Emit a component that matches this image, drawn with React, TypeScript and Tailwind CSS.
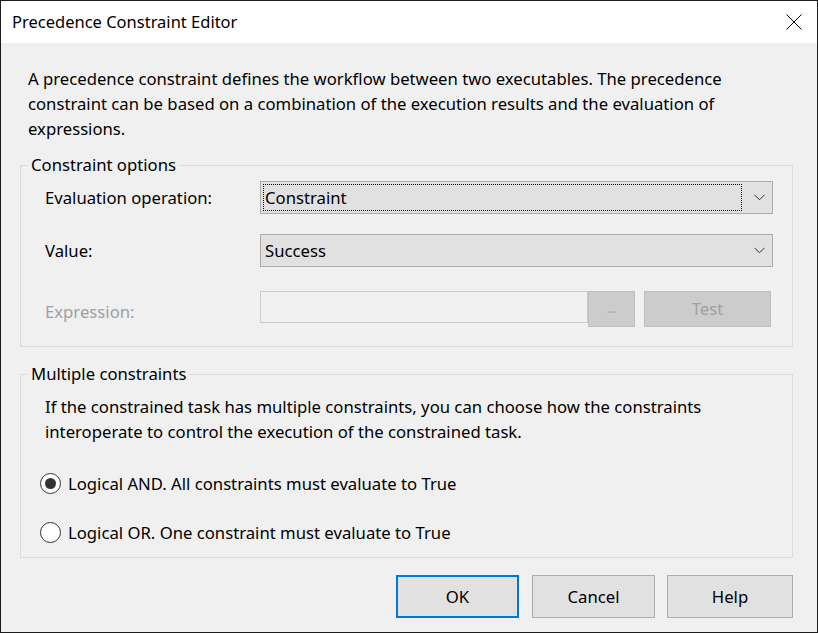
import React from 'react';

const font = "font-['Noto_Sans','Open_Sans',sans-serif]";

const Chevron = () => (
  <svg width="11" height="7" viewBox="0 0 11 7" className="shrink-0">
    <path d="M0.5 0.8 L5.5 5.8 L10.5 0.8" fill="none" stroke="#333333" strokeWidth="1" />
  </svg>
);

interface ComboProps {
  value: string;
  focused?: boolean;
}

const Combo = ({ value, focused }: ComboProps) => (
  <div className="flex h-[33px] w-[513px] items-center border border-[#adadad] bg-[#e1e1e1] pr-[6px]">
    <div
      className={
        focused
          ? 'ml-[2px] flex h-[27px] flex-1 items-center border border-dotted border-black pl-[1px]'
          : 'ml-[2px] flex h-[27px] flex-1 items-center border border-transparent pl-[1px]'
      }
    >
      {value}
    </div>
    <div className="ml-[10px] flex w-[14px] justify-center">
      <Chevron />
    </div>
  </div>
);

interface RadioProps {
  label: string;
  checked?: boolean;
}

const Radio = ({ label, checked }: RadioProps) => (
  <div className="flex h-[25px] items-center gap-[7px]">
    <span className="flex h-[21px] w-[21px] items-center justify-center rounded-full border border-[#333333] bg-white">
      {checked && <span className="h-[11px] w-[11px] rounded-full bg-[#333333]" />}
    </span>
    <span className="leading-[25px]">{label}</span>
  </div>
);

const DialogButton = ({ label, primary, width }: { label: string; primary?: boolean; width: string }) => (
  <button
    className={
      primary
        ? `h-[43px] ${width} border-2 border-[#0078d7] bg-[#e1e1e1]`
        : `h-[43px] ${width} border border-[#adadad] bg-[#e1e1e1]`
    }
  >
    {label}
  </button>
);

export default function App() {
  return (
    <div className={`${font} flex h-[633px] w-[818px] flex-col border border-[#1c1c1c] bg-[#f0f0f0] text-[16.7px] text-black`}>
      {/* Title bar */}
      <div className="flex h-[42px] items-center justify-between bg-white pl-[11px] pr-[15px]">
        <span className="text-[16.5px]">Precedence Constraint Editor</span>
        <svg width="16" height="16" viewBox="0 0 16 16">
          <path d="M0.5 0.5 L15.5 15.5 M15.5 0.5 L0.5 15.5" stroke="#000" strokeWidth="1" />
        </svg>
      </div>

      {/* Body */}
      <div className="flex flex-1 flex-col px-[19px]">
        <p className="mt-[23px] pl-[8px] leading-[25px]">
          A precedence constraint defines the workflow between two executables. The precedence
          <br />
          constraint can be based on a combination of the execution results and the evaluation of
          <br />
          expressions.
        </p>

        <fieldset className="mt-[14px] w-[773px] border border-[#dcdcdc]">
          <legend className="ml-[7px] px-[3px] leading-[20px]">Constraint options</legend>
          <div className="flex flex-col pl-[24px] pb-[19px] pt-[6px]">
            <div className="flex items-center">
              <span className="w-[215px]">Evaluation operation:</span>
              <Combo value="Constraint" focused />
            </div>
            <div className="mt-[20px] flex items-center">
              <span className="w-[215px]">Value:</span>
              <Combo value="Success" />
            </div>
            <div className="mt-[24px] flex items-start">
              <span className="mt-[8px] w-[215px] text-[#a0a0a0]">Expression:</span>
              <div className="h-[32px] w-[328px] border border-[#cccccc] bg-[#f0f0f0]" />
              <div className="flex h-[36px] w-[47px] items-center justify-center border border-[#bfbfbf] bg-[#cccccc] text-[12px] text-[#a0a0a0]">
                ...
              </div>
              <div className="ml-[9px] flex h-[36px] w-[127px] items-center justify-center border border-[#bfbfbf] bg-[#cccccc] text-[#a0a0a0]">
                Test
              </div>
            </div>
          </div>
        </fieldset>

        <fieldset className="mt-[17px] w-[773px] border border-[#dcdcdc]">
          <legend className="ml-[7px] px-[3px] leading-[20px]">Multiple constraints</legend>
          <div className="flex flex-col pl-[24px] pb-[12px] pt-[10px]">
            <p className="leading-[25px]">
              If the constrained task has multiple constraints, you can choose how the constraints
              <br />
              interoperate to control the execution of the constrained task.
            </p>
            <div className="mt-[27px] -ml-[5px] flex flex-col gap-[24px]">
              <Radio label="Logical AND. All constraints must evaluate to True" checked />
              <Radio label="Logical OR. One constraint must evaluate to True" />
            </div>
          </div>
        </fieldset>

        <div className="mt-[17px] flex justify-end pr-[5px]">
          <DialogButton label="OK" primary width="w-[123px]" />
          <div className="w-[13px]" />
          <DialogButton label="Cancel" width="w-[123px]" />
          <div className="w-[12px]" />
          <DialogButton label="Help" width="w-[126px]" />
        </div>
      </div>
    </div>
  );
}
